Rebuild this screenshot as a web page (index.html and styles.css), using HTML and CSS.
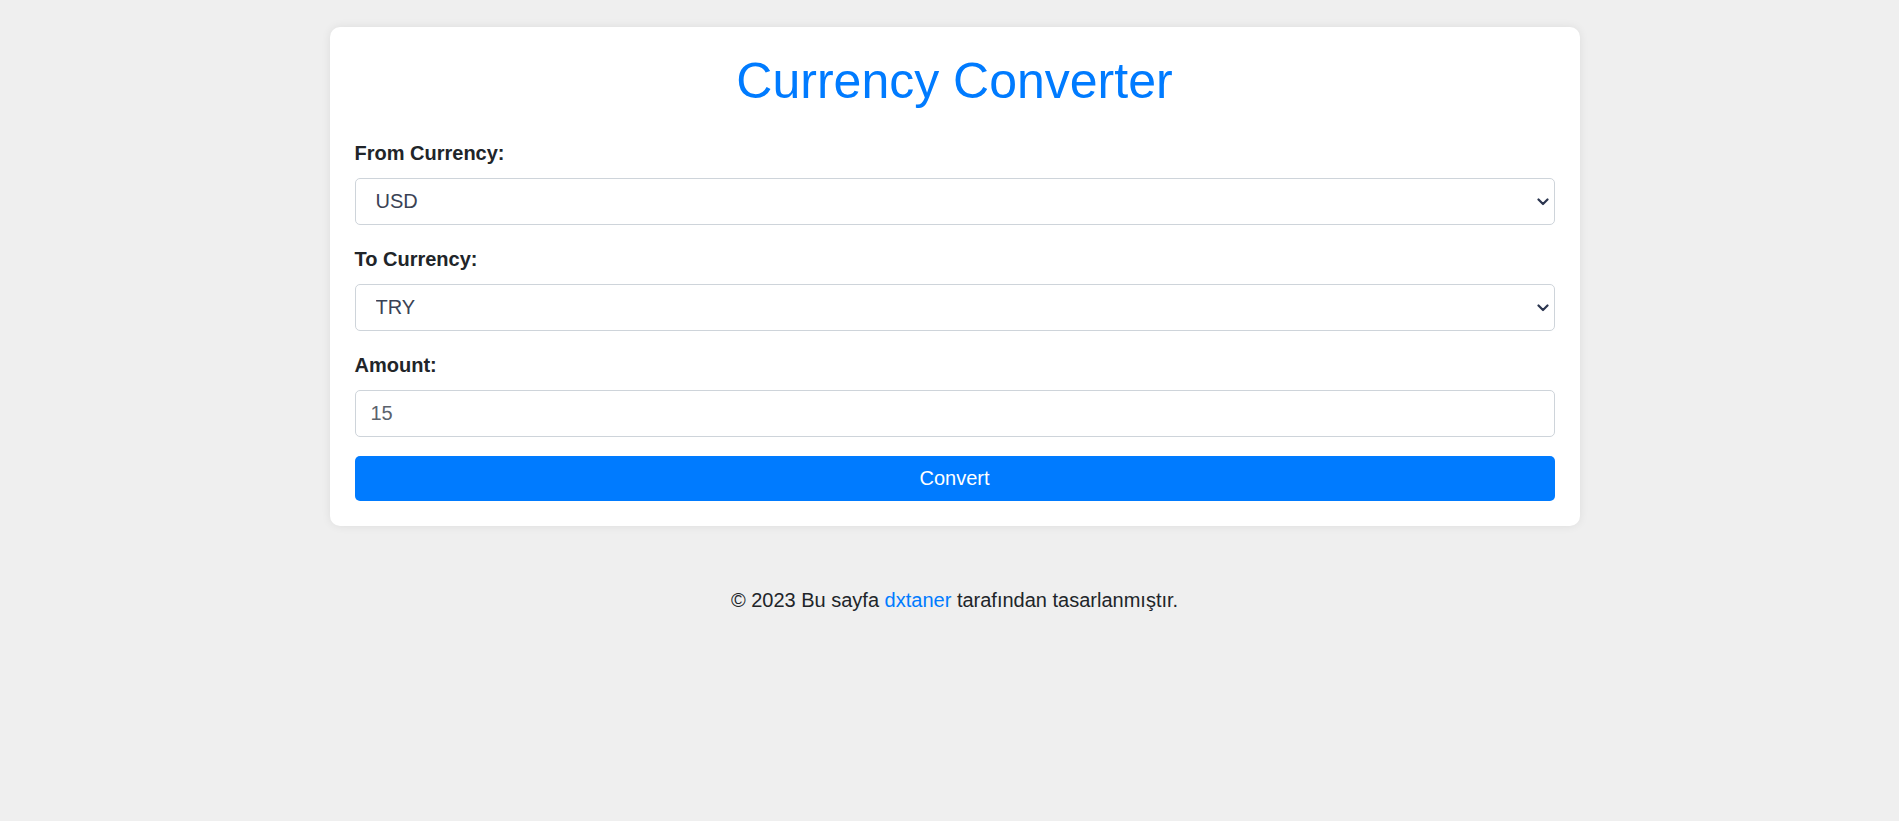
FILE: index.html
```html
<!DOCTYPE html>
<html lang="tr">
<head>
<meta charset="utf-8">
<title>Currency Converter</title>
<link rel="stylesheet" href="styles.css">
</head>
<body>
<div class="page">
  <main class="card">
    <h1 class="title">Currency Converter</h1>
    <form class="form">
      <div class="field">
        <label class="label" for="from">From Currency:</label>
        <div class="select-wrap">
          <select id="from" class="control select">
            <option>USD</option>
            <option>EUR</option>
            <option>TRY</option>
          </select>
          <svg class="chevron" width="12" height="8" viewBox="0 0 12 8"><path d="M1.5 1.5 L6 6 L10.5 1.5" fill="none" stroke="#2c3650" stroke-width="2.2" stroke-linecap="round" stroke-linejoin="round"/></svg>
        </div>
      </div>
      <div class="field">
        <label class="label" for="to">To Currency:</label>
        <div class="select-wrap">
          <select id="to" class="control select">
            <option>TRY</option>
            <option>USD</option>
            <option>EUR</option>
          </select>
          <svg class="chevron" width="12" height="8" viewBox="0 0 12 8"><path d="M1.5 1.5 L6 6 L10.5 1.5" fill="none" stroke="#2c3650" stroke-width="2.2" stroke-linecap="round" stroke-linejoin="round"/></svg>
        </div>
      </div>
      <div class="field field-last">
        <label class="label" for="amount">Amount:</label>
        <input id="amount" class="control input" type="text" value="15">
      </div>
      <button type="button" class="button">Convert</button>
    </form>
  </main>
  <footer class="footer">© 2023 Bu sayfa <a class="link" href="#">dxtaner</a> tarafından tasarlanmıştır.</footer>
</div>
</body>
</html>
```
FILE: styles.css
```css
html, body {
  margin: 0;
  padding: 0;
  background: #efefef;
  font-family: "Liberation Sans", Arial, sans-serif;
  color: #212529;
}
.page {
  padding: 27px 0 0 10px;
}
.card {
  width: 1250px;
  box-sizing: border-box;
  margin: 0 auto;
  background: #ffffff;
  border-radius: 10px;
  padding: 25.5px 25px 25px 25px;
  box-shadow: 0 0 10px rgba(0, 0, 0, 0.08);
}
.title {
  margin: 0 0 32px 0;
  font-size: 50px;
  line-height: 57px;
  font-weight: normal;
  color: #007bff;
  text-align: center;
}
.form {
  display: flex;
  flex-direction: column;
}
.field {
  display: flex;
  flex-direction: column;
  margin-bottom: 23px;
}
.field-last {
  margin-bottom: 19px;
}
.label {
  font-size: 20px;
  line-height: 23px;
  font-weight: bold;
  color: #212529;
  margin-bottom: 13px;
}
.select-wrap {
  position: relative;
}
.control {
  display: block;
  width: 100%;
  box-sizing: border-box;
  height: 47px;
  margin: 0;
  border: 1.25px solid #ced4da;
  border-radius: 5px;
  background: #ffffff;
  font-family: "Liberation Sans", Arial, sans-serif;
  font-size: 20px;
  outline: none;
}
.select {
  appearance: none;
  -webkit-appearance: none;
  padding: 0 15px 0 20px;
  color: #3a4254;
}
.input {
  padding: 0 15px 0 15px;
  color: #5a626c;
}
.chevron {
  position: absolute;
  right: 6px;
  top: 20px;
  pointer-events: none;
}
.button {
  display: block;
  width: 100%;
  height: 45px;
  border: none;
  border-radius: 5px;
  background: #007bff;
  color: #ffffff;
  font-family: "Liberation Sans", Arial, sans-serif;
  font-size: 20px;
  padding: 0;
  cursor: pointer;
}
.footer {
  margin-top: 63px;
  text-align: center;
  font-size: 20px;
  line-height: 23px;
  color: #212529;
}
.link {
  color: #007bff;
  text-decoration: none;
}
```
